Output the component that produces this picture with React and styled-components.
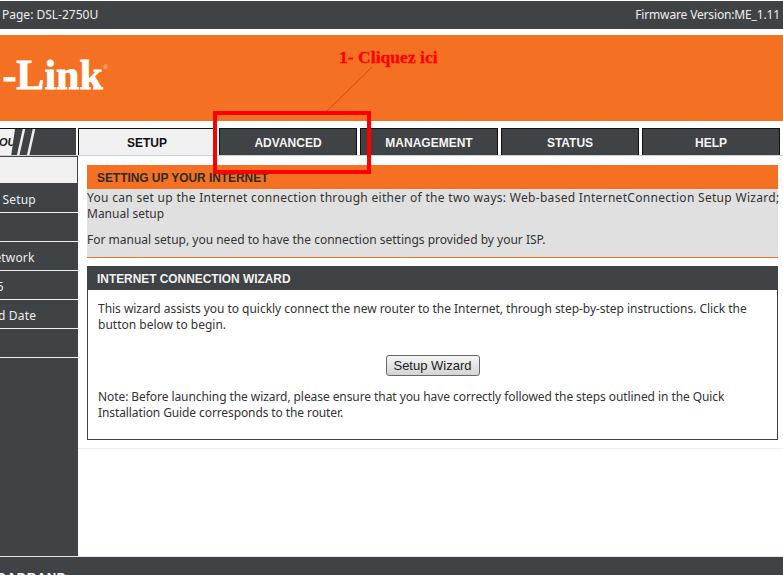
import React from "react";
import styled, { createGlobalStyle } from "styled-components";

const Global = createGlobalStyle`
  html, body { margin: 0; padding: 0; background: #fff; overflow: hidden; }
  body { width: 783px; height: 575px; font-family: "Noto Sans", "DejaVu Sans", sans-serif; }
`;
const ui = `"Noto Sans", "DejaVu Sans", sans-serif`;
const dark = "#404345";
const orange = "#f47023";

const Page = styled.div`
  position: relative;
  width: 783px;
  height: 575px;
  overflow: hidden;
  display: flex;
  flex-direction: column;
  background: #fff;
  font-family: ${ui};
  font-size: 12px;
  color: #333;
`;
const TopBar = styled.div`
  margin-top: 1px;
  height: 28px;
  flex: none;
  box-sizing: border-box;
  background: ${dark};
  color: #eee;
  display: flex;
  justify-content: space-between;
  align-items: center;
  padding: 0 3px 2px 2px;
  font-size: 12px;
`;
const Firmware = styled.span`
  letter-spacing: -0.15px;
`;
const Banner = styled.div`
  margin-top: 6px;
  height: 86px;
  flex: none;
  background: ${orange};
  display: flex;
  align-items: center;
  overflow: hidden;
`;
const LogoBox = styled.div`
  width: 108px;
  height: 60px;
  margin-top: -6px;
  display: flex;
  justify-content: flex-end;
  align-items: center;
  overflow: hidden;
`;
const Logo = styled.span`
  flex: none;
  font-family: "Liberation Serif", serif;
  font-weight: 700;
  font-size: 42px;
  -webkit-text-stroke: 0.8px #fff;
  color: #fff;
  white-space: nowrap;
`;
const LogoHidden = styled.span`
  padding-right: 6px;
`;
const Reg = styled.sup`
  font-size: 7px;
  -webkit-text-stroke: 0;
  color: #f8c9a8;
  vertical-align: 20px;
  line-height: 0;
`;
const TabRow = styled.div`
  margin-top: 7px;
  height: 27px;
  flex: none;
  display: flex;
  gap: 3px;
  border-bottom: 1px solid #c9d2dc;
`;
const Brand = styled.div`
  width: 76px;
  flex: none;
  background: ${dark};
  border-top: 1px solid #111;
  box-sizing: border-box;
  display: flex;
  align-items: center;
  overflow: hidden;
`;
const BrandWord = styled.span`
  width: 15px;
  height: 100%;
  background: #f1f1f1;
  clip-path: polygon(0 0, 100% 0, 75% 100%, 0 100%);
  display: flex;
  align-items: center;
  justify-content: flex-start;
  font-family: "Liberation Sans", sans-serif;
  font-style: italic;
  font-weight: 700;
  font-size: 11px;
  color: #222;
  overflow: hidden;
  flex: none;
`;
const BrandWordText = styled.span`
  margin-left: -1px;
`;
const Tab = styled.div`
  width: 138px;
  flex: none;
  box-sizing: border-box;
  margin-left: ${(p) => p.$ml || 0}px;
  border: 1px solid #111;
  border-bottom: none;
  background: ${(p) => (p.$active ? "#f1f1f1" : dark)};
  color: ${(p) => (p.$active ? "#111" : "#f4f4f4")};
  display: flex;
  align-items: center;
  justify-content: center;
  padding-top: 1px;
  font-family: "Liberation Sans", sans-serif;
  font-weight: 700;
  font-size: 12px;
`;
const Body = styled.div`
  flex: 1;
  display: flex;
  min-height: 0;
`;
const Side = styled.nav`
  width: 78px;
  flex: none;
  background: ${dark};
  display: flex;
  flex-direction: column;
  overflow: hidden;
`;
const SideItem = styled.div`
  height: ${(p) => (p.$active ? 28 : 29)}px;
  flex: none;
  box-sizing: border-box;
  white-space: nowrap;
  color: #eee;
  font-size: 12px;
  letter-spacing: 0.15px;
  padding-top: 1px;
  line-height: 30px;
  text-indent: -48px;
  border-bottom: 1px solid #f0f0f0;
  background: ${(p) => (p.$active ? "#f1f1f1" : dark)};
  ${(p) => p.$active && `border: 1px solid ${dark}; border-left: none;`}
`;
const Main = styled.main`
  flex: 1;
  min-width: 0;
  display: flex;
  flex-direction: column;
`;
const Content = styled.div`
  padding: 9px 5px 8px 9px;
  border-bottom: 1px solid #eee;
  display: flex;
  flex-direction: column;
  gap: 8px;
`;
const IntroCard = styled.section`
  background: #e0e0e0;
  border-bottom: 1px solid ${orange};
  padding-bottom: 9px;
`;
const IntroHead = styled.h2`
  margin: 0 0 1px;
  height: 24px;
  background: ${orange};
  color: #2b2b2b;
  font-family: "Liberation Sans", sans-serif;
  font-size: 11.9px;
  font-weight: 700;
  line-height: 26px;
  padding-left: 10px;
`;
const IntroText = styled.p`
  margin: 0 0 ${(p) => p.$gap || 0}px;
  line-height: 16px;
  color: #333;
  white-space: nowrap;
  letter-spacing: ${(p) => p.$spread || 0}px;
`;
const WizardCard = styled.section`
  border: 1px solid ${dark};
  border-top: none;
`;
const WizardHead = styled.h2`
  margin: 0;
  height: 24px;
  background: ${dark};
  color: #f2f2f2;
  font-family: "Liberation Sans", sans-serif;
  font-size: 11.9px;
  font-weight: 700;
  line-height: 26px;
  padding-left: 9px;
`;
const WizardBody = styled.div`
  padding: 11px 10px 19px;
  display: flex;
  flex-direction: column;
`;
const WizardText = styled.p`
  margin: 0;
  line-height: 15.5px;
  color: #333;
  white-space: nowrap;
  letter-spacing: ${(p) => p.$spread || 0}px;
`;
const WizardButton = styled.button`
  align-self: center;
  margin: 23px 0 13px;
  width: 94px;
  height: 21px;
  padding: 0;
  border: 1px solid #666;
  border-radius: 3px;
  background: linear-gradient(#f6f6f6, #d4d4d4);
  color: #222;
  font-family: "Liberation Sans", sans-serif;
  font-size: 13px;
`;
const Footer = styled.footer`
  height: 18px;
  flex: none;
  background: ${dark};
  border-top: 1px solid #dfe4e8;
  overflow: hidden;
`;
const FooterWord = styled.div`
  font-family: "Liberation Sans", sans-serif;
  font-weight: 700;
  font-size: 13px;
  letter-spacing: 0.6px;
  color: #fff;
  margin-left: -24px;
  padding-top: 14px;
  line-height: 14px;
`;
const Callout = styled.div`
  position: absolute;
  left: 339px;
  top: 47px;
  color: #f00;
  font-family: "Liberation Serif", serif;
  font-weight: 700;
  font-size: 17.6px;
  -webkit-text-stroke: 0.3px #f00;
  line-height: 20px;
`;
const RedBox = styled.div`
  position: absolute;
  left: 213px;
  top: 111px;
  width: 158px;
  height: 63px;
  box-sizing: border-box;
  border: 4px solid #f00;
`;
const Overlay = styled.svg`
  position: absolute;
  left: 0;
  top: 0;
  pointer-events: none;
`;

export default function App() {
  return (
    <Page>
      <Global />
      <TopBar>
        <span>Page: DSL-2750U</span>
        <Firmware>Firmware Version:ME_1.11</Firmware>
      </TopBar>
      <Banner>
        <LogoBox>
          <Logo><LogoHidden>D</LogoHidden>-Link<Reg>®</Reg></Logo>
        </LogoBox>
      </Banner>
      <TabRow>
        <Brand>
          <BrandWord><BrandWordText>OU</BrandWordText></BrandWord>
          <svg width="30" height="27" viewBox="0 0 30 27">
            <path d="M3 27 L9 0 M13 27 L19 0" stroke="#eee" strokeWidth="2.5" fill="none" />
          </svg>
        </Brand>
        <Tab $active $ml={-1}>SETUP</Tab>
        <Tab>ADVANCED</Tab>
        <Tab>MANAGEMENT</Tab>
        <Tab>STATUS</Tab>
        <Tab>HELP</Tab>
      </TabRow>
      <Body>
        <Side>
          <SideItem $active>Wizard</SideItem>
          <SideItem>Internet Setup</SideItem>
          <SideItem>Wi-Fi</SideItem>
          <SideItem>Local Network</SideItem>
          <SideItem>Local IP5</SideItem>
          <SideItem>Time and Date</SideItem>
          <SideItem>Logout</SideItem>
        </Side>
        <Main>
          <Content>
            <IntroCard>
              <IntroHead>SETTING UP YOUR INTERNET</IntroHead>
              <IntroText $spread={0.3}>You can set up the Internet connection through either of the two ways: Web-based InternetConnection Setup Wizard;</IntroText>
              <IntroText $gap={10}>Manual setup</IntroText>
              <IntroText>For manual setup, you need to have the connection settings provided by your ISP.</IntroText>
            </IntroCard>
            <WizardCard>
              <WizardHead>INTERNET CONNECTION WIZARD</WizardHead>
              <WizardBody>
                <WizardText $spread={-0.035}>This wizard assists you to quickly connect the new router to the Internet, through step-by-step instructions. Click the</WizardText>
                <WizardText>button below to begin.</WizardText>
                <WizardButton>Setup Wizard</WizardButton>
                <WizardText $spread={-0.075}>Note: Before launching the wizard, please ensure that you have correctly followed the steps outlined in the Quick</WizardText>
                <WizardText $spread={-0.1}>Installation Guide corresponds to the router.</WizardText>
              </WizardBody>
            </WizardCard>
          </Content>
        </Main>
      </Body>
      <Footer>
        <FooterWord>BROADBAND</FooterWord>
      </Footer>
      <Callout>1- Cliquez ici</Callout>
      <Overlay width="783" height="575">
        <line x1="372" y1="67" x2="327" y2="111" stroke="#e8401c" strokeWidth="1" />
      </Overlay>
      <RedBox />
    </Page>
  );
}
